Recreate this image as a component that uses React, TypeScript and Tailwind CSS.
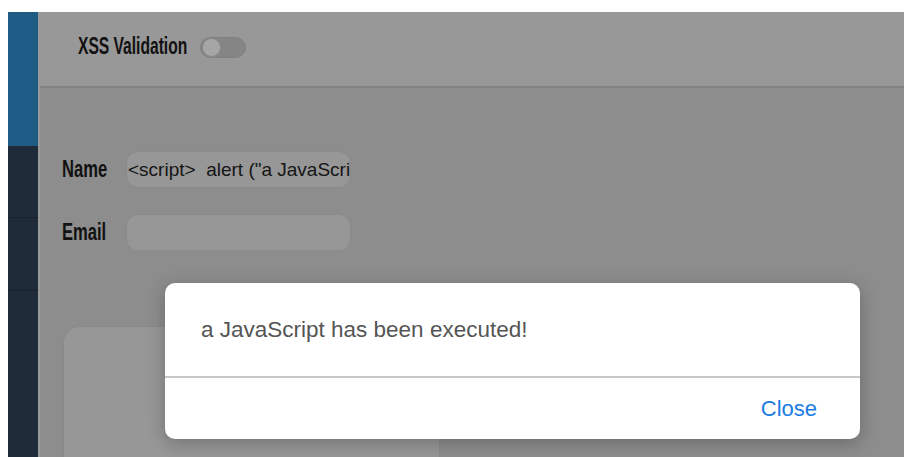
import { useState } from 'react'

const sans = { fontFamily: '"Liberation Sans", Arial, sans-serif' }

// narrow bold heading text; no condensed face is installed, so squeeze it horizontally
function Narrow({ children, width, size, squeeze }: { children: string; width: string; size: string; squeeze: string }) {
  return (
    <span className={`inline-block ${width} whitespace-nowrap`}>
      <span
        className={`inline-block origin-left font-bold text-[#111] leading-none ${squeeze} ${size}`}
        style={sans}
      >
        {children}
      </span>
    </span>
  )
}

function Toggle({ on }: { on: boolean }) {
  return (
    <div className="w-[46px] h-[21px] rounded-full bg-[#858585] border border-[#808080] flex items-center px-[1px]">
      <div
        className={
          on
            ? 'ml-auto w-[19px] h-[19px] rounded-full bg-[#a6a6a6] border border-[#8a8a8a]'
            : 'w-[19px] h-[19px] rounded-full bg-[#a6a6a6] border border-[#8a8a8a]'
        }
      />
    </div>
  )
}

function Field({ label, value }: { label: string; value: string }) {
  return (
    <div className="flex items-center">
      <label className="w-[64px]">
        <Narrow width="w-[64px]" size="text-[24px]" squeeze="scale-x-[0.69]">{label}</Narrow>
      </label>
      <input
        readOnly
        value={value}
        className="w-[225px] h-[37px] rounded-[12px] bg-[#979797] border border-[#8a8a8a] pl-[1px] text-[19px] text-[#151515] outline-none"
        style={sans}
      />
    </div>
  )
}

export default function App() {
  const [xss] = useState(false)

  return (
    <div className="relative w-full h-[457px] bg-white pt-[12px] pl-[8px] overflow-hidden">
      <div className="flex h-full">
        {/* sidebar */}
        <div className="w-[30px] shrink-0 flex flex-col bg-[#1f2b39]">
          <div className="h-[134px] bg-[#1e5b85]" />
          <div className="h-[72px] border-b border-[#18222d]" />
          <div className="h-[73px] border-b border-[#18222d]" />
          <div className="flex-1" />
        </div>

        <div className="flex-1 flex flex-col bg-[#8d8d8d] border-l-2 border-[#999]">
          <header className="h-[76px] shrink-0 bg-[#989898] border-b-2 border-[#838383] flex items-center pl-[38px] gap-[12px] pb-[4px]">
            <Narrow width="w-[110px]" size="text-[24px]" squeeze="scale-x-[0.65]">XSS Validation</Narrow>
            <Toggle on={xss} />
          </header>

          <div className="pl-[22px] pt-[63px] flex flex-col gap-[26px]">
            <Field label="Name" value={'<script>  alert ("a JavaScript has been executed!")</script>'} />
            <Field label="Email" value="" />
          </div>

          <div className="ml-[23px] mt-[75px] w-[377px] flex-1 rounded-t-[16px] bg-[#979797] border border-b-0 border-[#8a8a8a]" />
        </div>
      </div>

      {/* alert dialog */}
      <div
        role="dialog"
        className="absolute left-[165px] top-[283px] w-[695px] h-[156px] bg-white rounded-[10px] shadow-[0_4px_18px_rgba(0,0,0,0.25)] flex flex-col"
        style={sans}
      >
        <div className="h-[93px] flex items-center pl-[36px] text-[22.5px] text-[#555]">
          a JavaScript has been executed!
        </div>
        <div className="h-[2px] bg-[#c8c8c8]" />
        <div className="flex-1 flex items-center justify-end pr-[43px]">
          <button className="text-[22px] text-[#1b7ce4]">Close</button>
        </div>
      </div>
    </div>
  )
}
